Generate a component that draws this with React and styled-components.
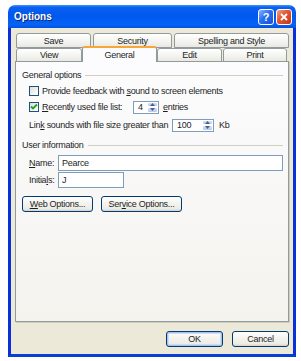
import React from 'react'
import styled, { createGlobalStyle } from 'styled-components'

const GlobalStyle = createGlobalStyle`
	html, body {
		margin: 0;
		padding: 0;
		background: #fff;
	}
	body {
		font-family: "Liberation Sans", Arial, sans-serif;
		font-size: 9px;
		letter-spacing: -0.28px;
		color: #1e1e1e;
	}
`

const Window = styled.div`
	margin: 5px 0 0 8px;
	width: 288px;
	height: 352px;
	display: flex;
	flex-direction: column;
	border-radius: 7px 7px 0 0;
	overflow: hidden;
`

const TitleBar = styled.div`
	height: 23px;
	flex: none;
	display: flex;
	align-items: center;
	padding: 0 4px 0 6px;
	background: linear-gradient(
		180deg,
		#3d95ff 0%,
		#0a61f0 10%,
		#0058ee 45%,
		#0663f5 85%,
		#0452e0 100%
	);
`

const Title = styled.div`
	flex: 1;
	color: #fff;
	font-size: 10px;
	font-weight: bold;
	letter-spacing: 0;
	text-shadow: 1px 1px 0 #0a246a;
`

const CaptionButton = styled.div`
	width: 16px;
	height: 16px;
	margin-left: 2px;
	box-sizing: border-box;
	border: 1px solid #fff;
	border-radius: 3px;
	display: flex;
	align-items: center;
	justify-content: center;
	color: #fff;
	font-weight: bold;
	font-size: 11px;
	background: ${p =>
		p.$close
			? 'linear-gradient(135deg, #f0a38b 0%, #e35a34 40%, #c6361a 100%)'
			: 'linear-gradient(135deg, #8ab4ff 0%, #2a6ff0 45%, #1b52d8 100%)'};
`

const Body = styled.div`
	flex: 1;
	display: flex;
	flex-direction: column;
	padding: 5px 4px 7px;
	background: #ece9d8;
	border: 3px solid #0831d9;
	border-top: none;
	border-bottom-color: #0a3fd6;
`

const TabRow = styled.div`
	display: flex;
	padding-left: 1px;
	height: ${p => p.$h}px;
	position: relative;
	z-index: ${p => (p.$front ? 2 : 1)};
`

const Tab = styled.div`
	width: ${p => p.$w}px;
	margin-right: ${p => p.$gap || 0}px;
	box-sizing: border-box;
	height: ${p => (p.$active ? 16 : p.$tall ? 15 : 14)}px;
	margin-top: ${p => (p.$active ? -2 : 0)}px;
	border: 1px solid #919b9c;
	border-bottom: ${p => (p.$active ? 'none' : '1px solid #919b9c')};
	border-top: ${p => (p.$active ? '2px solid #f7a737' : '1px solid #919b9c')};
	border-radius: 3px 3px 0 0;
	display: flex;
	align-items: center;
	justify-content: center;
	background: ${p =>
		p.$active
			? '#fcfcfe'
			: 'linear-gradient(180deg, #fff 0%, #f3f3ef 60%, #e9e8e2 100%)'};
`

const Panel = styled.div`
	flex: 1;
	margin-top: -1px;
	position: relative;
	z-index: 1;
	border: 1px solid #919b9c;
	box-shadow: 1px 1px 0 #d0cec1;
	background: linear-gradient(180deg, #fcfcfe 0%, #f4f3ee 100%);
	padding: 7px 5px 0 6px;
	display: flex;
	flex-direction: column;
`

const GroupHeader = styled.div`
	height: 12px;
	display: flex;
	align-items: center;
	margin-top: ${p => p.$mt || 0}px;
	&::after {
		content: '';
		flex: 1;
		height: 0;
		border-top: 1px solid #d0d0bf;
		margin-left: 4px;
	}
`

const Row = styled.div`
	height: 16px;
	display: flex;
	align-items: center;
	padding-left: 7px;
	margin-top: ${p => p.$mt || 0}px;
`

const Label = styled.span`
	width: ${p => (p.$w ? `${p.$w}px` : 'auto')};
	flex: none;
	white-space: nowrap;
	display: flex;
	align-items: center;
	margin-left: ${p => p.$ml || 0}px;
`

const Box = styled.span`
	width: 10px;
	height: 10px;
	box-sizing: border-box;
	border: 1px solid #1c5180;
	background: linear-gradient(135deg, #dcdcd7 0%, #fff 90%);
	margin-right: 3px;
	display: flex;
	align-items: center;
	justify-content: center;
	flex: none;
`

const U = styled.span`
	text-decoration: underline;
	text-underline-offset: 1px;
`

const Spin = styled.div`
	width: ${p => p.$w}px;
	height: 13px;
	box-sizing: border-box;
	border: 1px solid #7f9db9;
	background: #fff;
	display: flex;
	flex: none;
`

const SpinValue = styled.div`
	flex: 1;
	padding-left: 4px;
	display: flex;
	align-items: center;
`

const SpinButtons = styled.div`
	width: 11px;
	display: flex;
	flex-direction: column;
	padding-left: 1px;
`

const SpinButton = styled.div`
	flex: 1;
	border-radius: 2px;
	border: 1px solid #fff;
	box-sizing: border-box;
	background: linear-gradient(180deg, #d2ddfa 0%, #b6c8f5 100%);
	display: flex;
	align-items: center;
	justify-content: center;
`

const TextBox = styled.div`
	width: ${p => p.$w}px;
	height: 16px;
	box-sizing: border-box;
	border: 1px solid #7f9db9;
	background: #fff;
	padding-left: 3px;
	display: flex;
	align-items: center;
`

const ButtonRow = styled.div`
	display: flex;
	gap: ${p => p.$gap}px;
	justify-content: ${p => (p.$end ? 'flex-end' : 'flex-start')};
	margin-top: ${p => p.$mt}px;
	flex: none;
`

const Button = styled.div`
	width: ${p => p.$w}px;
	height: 16px;
	box-sizing: border-box;
	border: 1px solid #003c74;
	border-radius: 3px;
	display: flex;
	align-items: center;
	justify-content: center;
	background: linear-gradient(180deg, #fff 0%, #f5f4ef 40%, #ecebe6 85%, #d6d0c5 100%);
	box-shadow: ${p => (p.$default ? 'inset 0 0 0 1px #a8c2ee, inset 0 0 0 2px #cedcf6' : 'none')};
	white-space: nowrap;
`

const Arrow = ({ up }) => (
	<svg width="5" height="3" viewBox="0 0 5 3">
		<path d={up ? 'M0 3 L2.5 0 L5 3 Z' : 'M0 0 L2.5 3 L5 0 Z'} fill="#4d6185" />
	</svg>
)

const SpinBox = ({ value, width }) => (
	<Spin $w={width}>
		<SpinValue>{value}</SpinValue>
		<SpinButtons>
			<SpinButton>
				<Arrow up />
			</SpinButton>
			<SpinButton>
				<Arrow />
			</SpinButton>
		</SpinButtons>
	</Spin>
)

const Check = ({ checked }) => (
	<Box>
		{checked && (
			<svg width="8" height="8" viewBox="0 0 8 8">
				<path d="M1 3.5 L3 5.5 L7 1.5" stroke="#21a121" strokeWidth="1.8" fill="none" />
			</svg>
		)}
	</Box>
)

const backTabs = [
	{ label: 'Save', w: 75, gap: 2 },
	{ label: 'Security', w: 79, gap: 2 },
	{ label: 'Spelling and Style', w: 115 }
]

const frontTabs = [
	{ label: 'View', w: 66 },
	{ label: 'General', w: 75, active: true },
	{ label: 'Edit', w: 65, gap: 1 },
	{ label: 'Print', w: 64 }
]

const App = () => {
	return (
		<>
			<GlobalStyle />
			<Window>
				<TitleBar>
					<Title>Options</Title>
					<CaptionButton>?</CaptionButton>
					<CaptionButton $close>
						<svg width="8" height="8" viewBox="0 0 8 8">
							<path d="M1 1 L7 7 M7 1 L1 7" stroke="#fff" strokeWidth="1.8" />
						</svg>
					</CaptionButton>
				</TitleBar>
				<Body>
					<TabRow $h={15}>
						{backTabs.map(t => (
							<Tab key={t.label} $w={t.w} $gap={t.gap} $tall>
								{t.label}
							</Tab>
						))}
					</TabRow>
					<TabRow $h={14} $front>
						{frontTabs.map(t => (
							<Tab key={t.label} $w={t.w} $gap={t.gap} $active={t.active}>
								{t.label}
							</Tab>
						))}
					</TabRow>
					<Panel>
						<GroupHeader>General options</GroupHeader>
						<Row $mt={2}>
							<Check />
							<Label>
								Provide feedback with&nbsp;<U>s</U>ound to screen elements
							</Label>
						</Row>
						<Row>
							<Check checked />
							<Label $w={91}>
								<U>R</U>ecently used file list:
							</Label>
							<SpinBox value="4" width={26} />
							<Label $ml={4}>
								<U>e</U>ntries
							</Label>
						</Row>
						<Row $mt={2}>
							<Label $w={143}>
								Lin<U>k</U>&nbsp;sounds with file size greater than
							</Label>
							<SpinBox value="100" width={42} />
							<Label $ml={5}>Kb</Label>
						</Row>
						<GroupHeader $mt={6}>User information</GroupHeader>
						<Row $mt={4}>
							<Label $w={29}>
								<U>N</U>ame:
							</Label>
							<TextBox $w={226}>Pearce</TextBox>
						</Row>
						<Row $mt={1}>
							<Label $w={29}>
								Initia<U>l</U>s:
							</Label>
							<TextBox $w={66}>J</TextBox>
						</Row>
						<ButtonRow $gap={8} $mt={8}>
							<Button $w={71}>
								<U>W</U>eb Options...
							</Button>
							<Button $w={81}>
								Ser<U>v</U>ice Options...
							</Button>
						</ButtonRow>
					</Panel>
					<ButtonRow $gap={9} $mt={9} $end>
						<Button $w={57} $default>
							OK
						</Button>
						<Button $w={57}>Cancel</Button>
					</ButtonRow>
				</Body>
			</Window>
		</>
	)
}

export default React.memo(App)
